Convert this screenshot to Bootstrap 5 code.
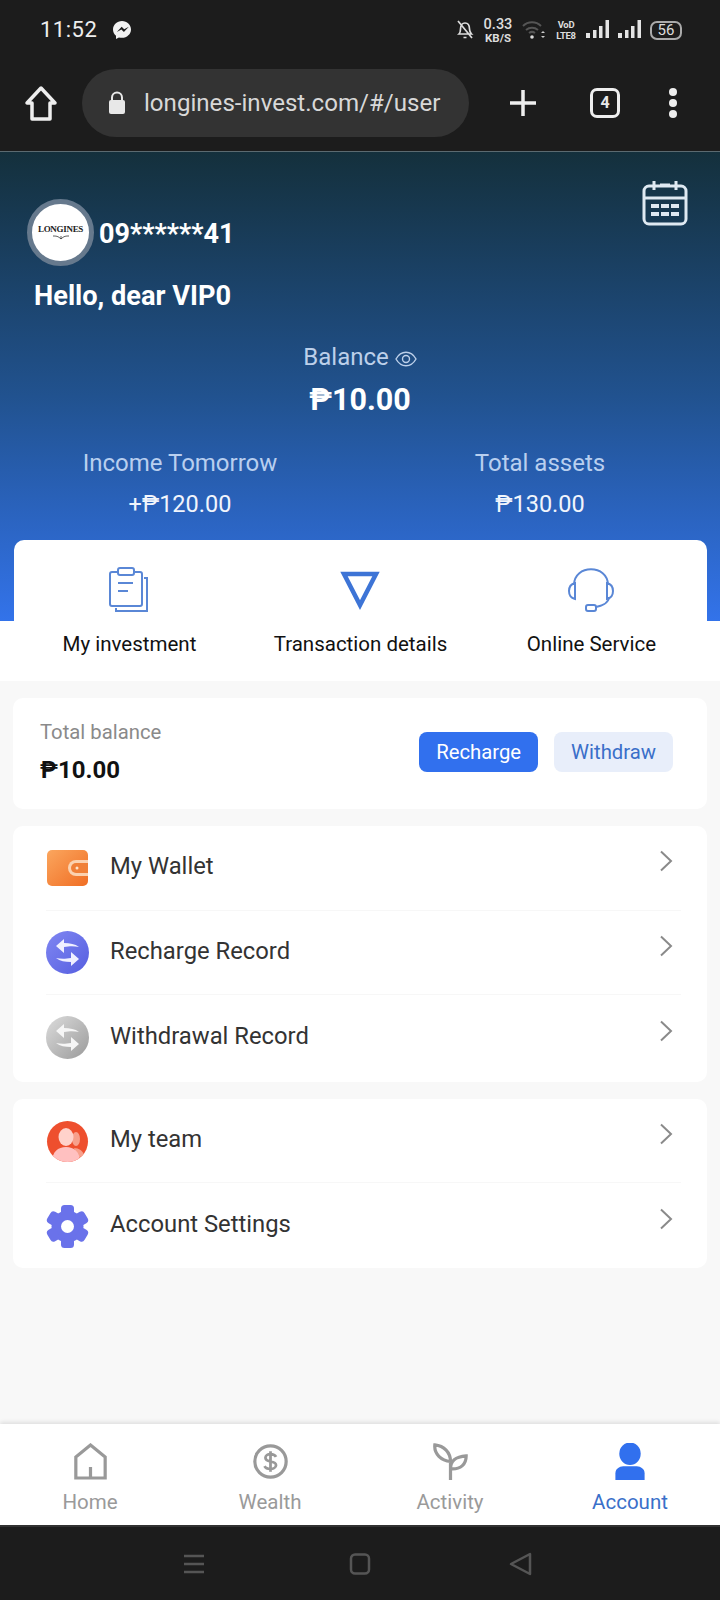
<!doctype html>
<html lang="en"><head><meta charset="utf-8"><title>Account</title>
<link href="https://cdn.jsdelivr.net/npm/bootstrap@5.3.0/dist/css/bootstrap.min.css" rel="stylesheet">
<style>
html,body{margin:0;background:#f8f8f8}
body{font-family:Roboto,"Liberation Sans",sans-serif;width:720px;height:1600px;overflow:hidden}
.shell{height:1600px}
.chrome{background:#1c1c1c;height:151px;color:#e9e9e9;flex:none}
.statusline{height:60px;padding:0 38px 0 40px}
.clock{font-size:22px;letter-spacing:.5px;color:#eee;line-height:1}
.statusicons{gap:9px}
.netspeed{font-weight:700;text-align:center;color:#ddd;width:30px}
.netspeed span{display:block;font-size:11.500px;line-height:12px}
.netspeed .big{font-size:14.500px;line-height:15px;font-weight:500}
.volte{font-size:9.500px;font-weight:700;line-height:11px;color:#ddd;text-align:center;width:22px;letter-spacing:-.3px}
.batt{border:2px solid #aaa;border-radius:7px;font-size:15px;line-height:15px;width:32px;height:19px;text-align:center;color:#ddd}
.urlrow{height:90px;padding:0 0 4px 24px}
.urlpill{background:#333;border-radius:34px;width:387px;height:68px;margin-left:24px;padding-left:25px;font-size:24.100px;color:#d8d8d8;white-space:nowrap}
.urlpill svg{flex:none;margin-right:17px}
.plusicon{margin-left:40px}
.tabcount{width:30px;height:30px;border:3px solid #eee;border-radius:7px;font-size:16px;font-weight:700;line-height:24px;text-align:center;margin-left:53px}
.moreicon{margin-left:47px}
.hero{height:470px;flex:none;border-top:1px solid #5b6a70;background:linear-gradient(180deg,#14303c 0%,#21528f 52%,#3373ea 100%);color:#fff;padding:0 14px;position:relative}
.calicon{position:absolute;right:32px;top:28px}
.userline{padding:46px 0 0 13px;height:114px}
.avatar{width:67px;height:67px;border-radius:50%;background:#fff;border:5px solid #66798d;font-family:"Liberation Serif",serif;font-size:9px;font-weight:700;color:#222;line-height:1;flex:none;letter-spacing:-.3px}
.avatar svg{display:block;margin-top:1px}
.uname{font-size:27px;font-weight:700;margin-left:5px;line-height:1;margin-top:5px}
.hello{font-size:27.200px;font-weight:700;line-height:32px;padding-left:20px;margin-top:14px}
.ballabel{font-size:24px;color:#bdd0ea;line-height:28px;margin-top:31px}
.balvalue{font-size:30.500px;font-weight:700;line-height:36px;margin-top:11px}
.subgrid{margin:31px -14px 0}
.subgrid .lab{font-size:24px;color:#b9cfef;line-height:28px}
.subgrid .val{font-size:23.500px;line-height:28px;margin-top:13px;color:#f1f5fc}
.shortband{background:#fff;height:60px;flex:none;position:relative}
.shortcard{background:#fff;border-radius:10px 10px 0 0;margin:-81px 13px 0 14px;height:141px;position:relative;padding-top:27px}
.shortcard .sc{width:33.33%;text-align:center;font-size:20.500px;color:#111;line-height:24px}
.shortcard svg{display:block;margin:0 auto 19px;height:46px}
.page{background:#f8f8f8;padding:17px 13px 0;gap:17px;flex:1 1 auto;min-height:0}
.balcard{background:#fff;border-radius:10px;height:111px;padding:0 34px 0 27px}
.ttl{font-size:20.300px;color:#8a8a8a;line-height:24px;margin-top:-4px}
.amt{font-size:24px;font-weight:700;color:#111;line-height:28px;margin-top:12px}
.btnwrap{margin-top:-4px}
.btn-charge,.btn-draw{font-size:20.300px;line-height:24px;padding:8px 17px;border:0;border-radius:8px}
.btn-charge{background:#3170ee;color:#fff}
.btn-draw{background:#e8eefa;color:#3a6fc9}
.listbox{background:#fff;border-radius:10px;padding:0 26px 0 33px}
.listbox.tall{padding-bottom:2px}
.rowitem{height:84.600px;font-size:23.800px;color:#333;border-bottom:1px solid #f7f7f7}
.rowitem:last-child{border-bottom:0}
.rowitem span{margin-top:-1px}
.rowitem .lic{width:43px;height:43px;flex:none;margin-right:21px;margin-top:1px;display:block}
.rowitem .chev{margin-left:auto;margin-top:-13px;margin-right:8px}
.tabbar{background:#fff;height:101px;flex:none;box-shadow:0 -2px 4px rgba(0,0,0,.1);position:relative}
.tabitem{width:25%;text-align:center;font-size:20.500px;color:#9a9a9a;padding-top:19px;line-height:24px}
.tabitem svg{display:block;margin:0 auto 10px;height:37px}
.tabitem.on{color:#3a6fc9}
.sysnav{background:#1c1c1c;height:75px;flex:none;border-top:2px solid #333}
.navmid{margin-left:144px}
.navback{margin-left:137px}
.navmenu{margin-left:-5px}
</style></head><body>
<div class="shell d-flex flex-column">
<div class="chrome">
 <div class="statusline d-flex align-items-center">
  <span class="clock">11:52</span>
  <svg class="ms-3" width="18" height="18" viewBox="0 0 18 18"><path d="M9 0C4 0 0 3.700 0 8.500c0 2.600 1.100 4.800 3 6.300V18l2.900-1.600c1 .3 2 .4 3.100.4 5 0 9-3.700 9-8.300S14 0 9 0z" fill="#f2f2f2"/><path d="M3.800 11 8.700 5.800l2.500 2.500 4.600-2.500-4.900 5.200-2.500-2.600z" fill="#1c1c1c"/></svg>
  <div class="ms-auto d-flex align-items-center statusicons">
   <svg width="18" height="22" viewBox="0 0 18 22" fill="none" stroke="#ddd" stroke-width="1.700"><path d="M3 15c1.500-1.500 1.500-3 1.500-5C4.500 6 6.500 4 9 4s4.500 2 4.500 6c0 2 .5 3.500 2 5zM2 2l14 17M7.500 18.500h3"/></svg>
   <div class="netspeed"><span class="big">0.33</span><span>KB/S</span></div>
   <svg width="24" height="20" viewBox="0 0 24 20" fill="none" stroke="#555" stroke-width="2"><path d="M1 6c5-5 13-5 18 0M4 10c3.500-3 8.500-3 12 0M7 13c2-1.500 4-1.500 6 0"/><circle cx="10" cy="17" r="1.800" fill="#ddd" stroke="none"/><path d="M19 13l2-2 2 2zM19 16l2 2 2-2z" fill="#ccc" stroke="none"/></svg>
   <div class="volte"><div>VoD</div><div>LTE8</div></div>
   <svg width="23" height="20" viewBox="0 0 23 20" fill="#e4e4e4"><rect x="0" y="13" width="4" height="5"/><rect x="7" y="10" width="3.500" height="8"/><rect x="13" y="6" width="3.500" height="12"/><rect x="19.500" y="0" width="3.500" height="18"/></svg>
   <svg width="23" height="20" viewBox="0 0 23 20" fill="#e4e4e4"><rect x="0" y="13" width="4" height="5"/><rect x="7" y="10" width="3.500" height="8"/><rect x="13" y="6" width="3.500" height="12"/><rect x="19.500" y="0" width="3.500" height="18"/></svg>
   <div class="batt">56</div>
  </div>
 </div>
 <div class="urlrow d-flex align-items-center">
  <svg width="34" height="44" viewBox="0 0 34 44" fill="none" stroke="#eee" stroke-width="3.500" stroke-linejoin="round"><path d="M17 7 3 22h5v16h18V22h5z"/></svg>
  <div class="urlpill d-flex align-items-center">
   <svg width="20" height="24" viewBox="0 0 20 24"><path d="M5 10V6.500a5 5 0 0 1 10 0V10" fill="none" stroke="#e8e8e8" stroke-width="2"/><rect x="2" y="9" width="16" height="14" rx="2" fill="#e8e8e8"/></svg>
   <span>longines-invest.com/#/user</span>
  </div>
  <svg class="plusicon" width="28" height="28" viewBox="0 0 28 28" stroke="#eee" stroke-width="3.500"><path d="M14 1v26M1 14h26"/></svg>
  <div class="tabcount">4</div>
  <svg class="moreicon" width="12" height="32" viewBox="0 0 12 32" fill="#eee"><circle cx="6" cy="5" r="4"/><circle cx="6" cy="16" r="4"/><circle cx="6" cy="27" r="4"/></svg>
 </div>
</div>
<div class="hero">
 <svg class="calicon" width="46" height="46" viewBox="0 0 46 46" fill="none" stroke="#dfe9f2" stroke-width="3"><rect x="2" y="6" width="42" height="38" rx="5"/><path d="M2 18h42M12 1v9M34 1v9M18 5h10"/><path d="M9 24h8v4H9zM19 24h8v4h-8zM29 24h8v4h-8zM9 32h8v4H9zM19 32h8v4h-8zM29 32h8v4h-8z" fill="#dfe9f2" stroke="none"/></svg>
 <div class="userline d-flex align-items-center"><div class="avatar d-flex flex-column align-items-center justify-content-center"><span>LONGINES</span><svg width="16" height="5" viewBox="0 0 16 5" fill="none" stroke="#333" stroke-width=".8"><path d="M0 1c3 0 5 0 8 3 3-3 5-3 8-3M8 1v3"/></svg></div><span class="uname">09******41</span></div>
 <div class="hello">Hello, dear VIP0</div>
 <div class="ballabel text-center">Balance <svg width="22" height="16" viewBox="0 0 22 16" fill="none" stroke="#bdd0ea" stroke-width="1.400"><path d="M1 8c5-9 15-9 20 0-5 9-15 9-20 0z"/><circle cx="11" cy="8" r="3.500"/></svg></div>
 <div class="balvalue text-center">₱10.00</div>
 <div class="subgrid row g-0 text-center"><div class="col-6"><div class="lab">Income Tomorrow</div><div class="val">+₱120.00</div></div><div class="col-6"><div class="lab">Total assets</div><div class="val">₱130.00</div></div></div>
</div>
<div class="shortband">
 <div class="shortcard d-flex">
  <div class="sc"><svg width="42" height="46" viewBox="0 0 42 46" fill="none" stroke="#5a87d6" stroke-width="2"><path d="M10 5H4a2 2 0 0 0-2 2v30a2 2 0 0 0 2 2h28a2 2 0 0 0 2-2V7a2 2 0 0 0-2-2h-6"/><rect x="10" y="1" width="16" height="7" rx="2"/><path d="M36 11h3v33H8v-3M10 16h15M10 24h10"/></svg>My investment</div>
  <div class="sc"><svg width="40" height="46" viewBox="0 0 40 46" fill="none" stroke="#3d74d6" stroke-width="4.500"><path d="M4 7h32L20 38z"/></svg>Transaction details</div>
  <div class="sc"><svg width="48" height="46" viewBox="0 0 48 46" fill="none" stroke="#5a87d6" stroke-width="2"><path d="M7 18C7 -3 41 -3 41 18M42 30c0 6-8 9-13 10"/><path d="M8 16v16c-8-2-8-14 0-16zM40 16v16c8-2 8-14 0-16z"/><rect x="19" y="38" width="10" height="6" rx="2"/></svg>Online Service</div>
 </div>
</div>
<div class="page d-flex flex-column">
 <div class="balcard d-flex align-items-center justify-content-between">
  <div><div class="ttl">Total balance</div><div class="amt">₱10.00</div></div>
  <div class="d-flex gap-3 btnwrap"><button class="btn btn-charge">Recharge</button><button class="btn btn-draw">Withdraw</button></div>
 </div>
 <div class="listbox tall">
  <div class="rowitem d-flex align-items-center">
   <svg class="lic" viewBox="0 0 43 43"><defs><linearGradient id="wg" x1="0" y1="0" x2="1" y2="1"><stop offset="0" stop-color="#fba65e"/><stop offset="1" stop-color="#f06e24"/></linearGradient></defs><rect x="1" y="3" width="41" height="36" rx="5" fill="url(#wg)"/><path d="M42 13H30a8 8 0 0 0 0 16h12z" fill="#fbd2b0"/><path d="M42 16H30a5 5 0 0 0 0 10h12z" fill="#f08038"/><circle cx="31" cy="21" r="1.500" fill="#ffe3cc"/></svg>
   <span>My Wallet</span>
   <svg class="chev" width="14" height="22" viewBox="0 0 14 22" fill="none" stroke="#8a8a8a" stroke-width="2"><path d="M2 1.500 12 11 2 20.500"/></svg>
  </div>
  <div class="rowitem d-flex align-items-center">
   <svg class="lic" viewBox="0 0 43 43"><defs><linearGradient id="pg" x1="0" y1="0" x2="1" y2="1"><stop offset="0" stop-color="#8087f2"/><stop offset="1" stop-color="#555ee0"/></linearGradient></defs><circle cx="21.500" cy="21.500" r="21.500" fill="url(#pg)"/><path d="M10 15 18 8v4c6 0 11 1 15 4-5-1-9-1-15 0v6zM33 28l-8 7v-4c-6 0-11-1-15-4 5 1 9 1 15 0v-6z" fill="#f0f0ff"/></svg>
   <span>Recharge Record</span>
   <svg class="chev" width="14" height="22" viewBox="0 0 14 22" fill="none" stroke="#8a8a8a" stroke-width="2"><path d="M2 1.500 12 11 2 20.500"/></svg>
  </div>
  <div class="rowitem d-flex align-items-center">
   <svg class="lic" viewBox="0 0 43 43"><defs><linearGradient id="gg" x1="0" y1="0" x2="1" y2="1"><stop offset="0" stop-color="#dcdcdc"/><stop offset="1" stop-color="#9a9a9a"/></linearGradient></defs><circle cx="21.500" cy="21.500" r="21.500" fill="url(#gg)"/><path d="M10 15 18 8v4c6 0 11 1 15 4-5-1-9-1-15 0v6zM33 28l-8 7v-4c-6 0-11-1-15-4 5 1 9 1 15 0v-6z" fill="#f6f6f6"/></svg>
   <span>Withdrawal Record</span>
   <svg class="chev" width="14" height="22" viewBox="0 0 14 22" fill="none" stroke="#8a8a8a" stroke-width="2"><path d="M2 1.500 12 11 2 20.500"/></svg>
  </div>
 </div>
 <div class="listbox">
  <div class="rowitem d-flex align-items-center">
   <svg class="lic" viewBox="0 0 43 43"><defs><clipPath id="cc"><circle cx="21.500" cy="21.500" r="20.500"/></clipPath></defs><circle cx="21.500" cy="21.500" r="20.500" fill="#ee4f2e"/><g clip-path="url(#cc)"><ellipse cx="30" cy="19" rx="4" ry="7" fill="#f7a08c"/><path d="M28 28c5 0 9 3 10 7l-6 3z" fill="#f7a08c"/><ellipse cx="20" cy="17" rx="7.500" ry="9" fill="#ffd2cb"/><path d="M6 42c0-10 6-15 14-15s14 5 14 15z" fill="#ffc0c0"/></g></svg>
   <span>My team</span>
   <svg class="chev" width="14" height="22" viewBox="0 0 14 22" fill="none" stroke="#8a8a8a" stroke-width="2"><path d="M2 1.500 12 11 2 20.500"/></svg>
  </div>
  <div class="rowitem d-flex align-items-center">
   <svg class="lic" viewBox="0 0 43 43"><g fill="#6a72ea"><circle cx="21.500" cy="21.500" r="16"/><rect x="15" y="0" width="13" height="10" rx="3.500"/><rect x="15" y="33" width="13" height="10" rx="3.500"/><rect x="15" y="0" width="13" height="10" rx="3.500" transform="rotate(60 21.500 21.500)"/><rect x="15" y="33" width="13" height="10" rx="3.500" transform="rotate(60 21.500 21.500)"/><rect x="15" y="0" width="13" height="10" rx="3.500" transform="rotate(-60 21.500 21.500)"/><rect x="15" y="33" width="13" height="10" rx="3.500" transform="rotate(-60 21.500 21.500)"/></g><circle cx="21.500" cy="21.500" r="6.500" fill="#fff"/></svg>
   <span>Account Settings</span>
   <svg class="chev" width="14" height="22" viewBox="0 0 14 22" fill="none" stroke="#8a8a8a" stroke-width="2"><path d="M2 1.500 12 11 2 20.500"/></svg>
  </div>
 </div>
</div>
<div class="tabbar d-flex">
 <div class="tabitem"><svg width="33" height="37" viewBox="0 0 36 40" fill="none" stroke="#999" stroke-width="3.500"><path d="M2 38V15L18 2l16 13v23zM18 38V26"/></svg>Home</div>
 <div class="tabitem"><svg width="35" height="37" viewBox="0 0 38 40" fill="none" stroke="#999" stroke-width="3.500"><circle cx="19" cy="20" r="17"/><path d="M25 15c-1-2-3-3-6-3s-5.500 1.500-5.500 4 2.500 3.500 5.500 4 6 1.500 6 4-3 4-6 4-5.500-1-6.500-3M19 9v22" stroke-width="3"/></svg>Wealth</div>
 <div class="tabitem"><svg width="35" height="37" viewBox="0 0 38 40" fill="none" stroke="#999" stroke-width="3.500"><path d="M19 40V20C19 10 12 3 2 2c-1 10 7 17 17 18zM19 28c0-9 5-13 17-14 0 9-6 15-17 14"/></svg>Activity</div>
 <div class="tabitem on"><svg width="30" height="37" viewBox="0 0 30 38" fill="#3170ee"><ellipse cx="15" cy="11" rx="11" ry="11.500"/><path d="M0 38V31c0-4 4-7 8-7h14c4 0 8 3 8 7v7z"/></svg>Account</div>
</div>
<div class="sysnav d-flex align-items-center justify-content-center">
 <svg class="navmenu" width="22" height="22" viewBox="0 0 22 22" stroke="#555" stroke-width="2.500"><path d="M1 3h20M1 11h20M1 19h20"/></svg>
 <svg class="navmid" width="22" height="22" viewBox="0 0 22 22" fill="none" stroke="#555" stroke-width="2.500"><rect x="2" y="1.500" width="18" height="19" rx="4"/></svg>
 <svg class="navback" width="24" height="24" viewBox="0 0 24 24" fill="none" stroke="#555" stroke-width="2.500" stroke-linejoin="round"><path d="M22 2v20L3 12z"/></svg>
</div>
</div>
</body></html>
